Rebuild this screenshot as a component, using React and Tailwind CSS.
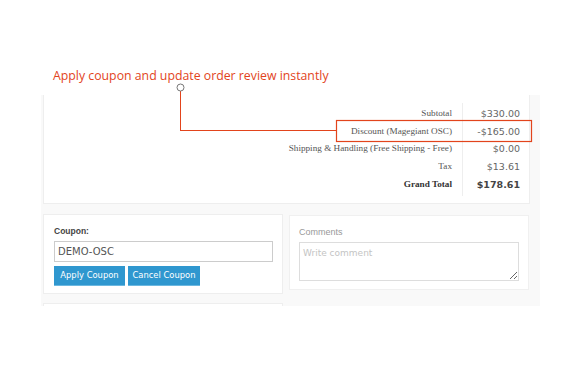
import React from "react";

const rows = [
  { label: "Subtotal", value: "$330.00" },
  { label: "Discount (Magegiant OSC)", value: "-$165.00" },
  { label: "Shipping & Handling (Free Shipping - Free)", value: "$0.00" },
  { label: "Tax", value: "$13.61" },
  { label: "Grand Total", value: "$178.61", bold: true },
];

const serif = { fontFamily: '"Liberation Serif", "DejaVu Serif", serif' };

export default function App() {
  return (
    <div className="relative w-[566px] h-[375px] bg-white overflow-hidden">
      <p className="pt-[68px] pl-[53px] h-[84px] text-[12.3px] leading-[16px] text-[#e2441c] font-['Open_Sans',sans-serif]">
        Apply coupon and update order review instantly
      </p>

      <div className="ml-[41px] mt-[11px] w-[499px] h-[211px] overflow-hidden bg-[#f9f9f9] pl-[2px]">
        {/* totals */}
        <div className="w-[487px] h-[109px] bg-white border-x border-b border-[#eeeeee] flex justify-end pt-[8px]">
          <div className="flex pb-[4px] h-[97px]">
            <div className="pr-[10px] pt-[2px] text-right" style={serif}>
              {rows.map((r) => (
                <div
                  key={r.label}
                  className={`h-[17.7px] leading-[17.7px] text-[9.2px] whitespace-nowrap ${
                    r.bold ? "font-bold text-[#333]" : "text-[#555]"
                  }`}
                >
                  {r.label}
                </div>
              ))}
            </div>
            <div className="w-[67px] pt-[2px] border-l border-[#eeeeee] pr-[9px] text-right font-['DejaVu_Sans',sans-serif]">
              {rows.map((r) => (
                <div
                  key={r.label}
                  className={`h-[17.7px] leading-[17.7px] text-[9.5px] whitespace-nowrap ${
                    r.bold ? "font-bold text-[#444]" : "text-[#666]"
                  }`}
                >
                  {r.value}
                </div>
              ))}
            </div>
          </div>
        </div>

        <div className="flex gap-[6px] mt-[10px]">
          <div className="w-[240px]">
            <div className="h-[80px] bg-white border border-[#eeeeee] pl-[10px] pt-[10px]">
              <div className="text-[8.5px] leading-[12px] font-bold text-[#444] font-['Liberation_Sans',sans-serif]">
                Coupon:
              </div>
              <input
                readOnly
                value="DEMO-OSC"
                className="mt-[4px] block w-[219px] h-[21px] border border-[#cccccc] px-[3px] text-[10px] text-[#555] font-['DejaVu_Sans',sans-serif] outline-none"
              />
              <div className="flex gap-[3px] mt-[4px]">
                <button className="w-[71px] h-[20px] bg-[#2f97cf] border-b border-[#6cb8e0] text-white text-[8.4px] font-['DejaVu_Sans',sans-serif]">
                  Apply Coupon
                </button>
                <button className="w-[72px] h-[20px] bg-[#2f97cf] border-b border-[#6cb8e0] text-white text-[8.4px] font-['DejaVu_Sans',sans-serif]">
                  Cancel Coupon
                </button>
              </div>
            </div>
            <div className="mt-[9px] h-[10px] bg-white border border-[#eeeeee]" />
          </div>

          <div className="w-[240px] h-[75px] mt-[1px] bg-white border border-[#f0f0f0] pl-[9px] pt-[10px]">
            <div className="text-[9px] leading-[12px] text-[#999] font-['Liberation_Sans',sans-serif]">
              Comments
            </div>
            <textarea
              placeholder="Write comment"
              className="mt-[4px] block w-[220px] h-[39px] border border-[#dddddd] px-[3px] py-[4px] text-[9px] placeholder:text-[#c4c4c4] font-['DejaVu_Sans',sans-serif] outline-none"
            />
          </div>
        </div>
      </div>

      {/* annotation overlay */}
      <svg className="absolute inset-0 pointer-events-none" width="566" height="375">
        <line x1="180.5" y1="91" x2="180.5" y2="130.5" stroke="#e2441c" strokeWidth="1" />
        <line x1="180" y1="130.5" x2="336" y2="130.5" stroke="#e2441c" strokeWidth="1" />
        <circle cx="180.5" cy="87.5" r="3.5" fill="white" stroke="#777" strokeWidth="1" />
        <rect x="336.5" y="120.5" width="195" height="21" fill="none" stroke="#e2441c" strokeWidth="1.2" />
      </svg>
    </div>
  );
}
